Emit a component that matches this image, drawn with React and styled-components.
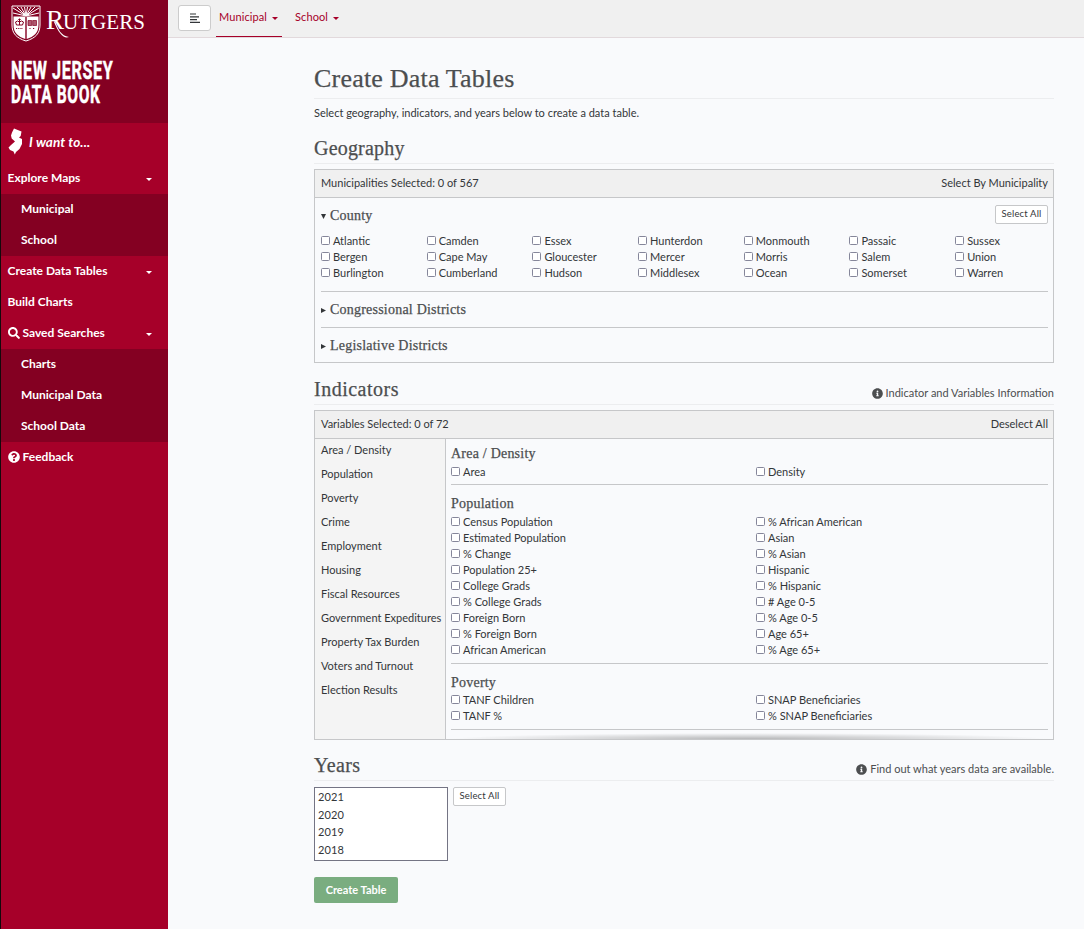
import React from "react";
import styled, { createGlobalStyle } from "styled-components";
import { FaSearch, FaQuestionCircle, FaInfoCircle } from "react-icons/fa";

const Global = createGlobalStyle`
  * { box-sizing: border-box; }
  body { margin: 0; background: #f9fafc; color: #333639; font: 11px/16px Lato, sans-serif; }
  h1, h2, h3, p { margin: 0; }
`;

const Page = styled.div`
  display: flex;
  height: 929px;
  overflow: hidden;
`;

const Sidebar = styled.aside`
  width: 168px;
  flex: none;
  background: #a60029;
  border-left: 1px solid #14090c;
  color: #fff;
`;

const Brand = styled.div`
  height: 123px;
  padding: 5px 0 0 10px;
  background: #840022;
`;

const LogoRow = styled.div`
  display: flex;
  height: 53px;
`;

const Wordmark = styled.svg`
  margin-left: 5px;
  overflow: visible;
  font-family: "Liberation Serif", serif;
`;

const BrandName = styled.div`
  width: 200px;
  font: bold 26.5px/24px Roboto, sans-serif;
  letter-spacing: 1px;
  -webkit-text-stroke: 0.5px #fff;
  transform: scaleX(${(p) => p.$stretch});
  transform-origin: 0 0;
`;

const Want = styled.div`
  display: flex;
  align-items: center;
  height: 40px;
  padding: 0 0 3px 7px;
  gap: 6px;
  font-size: 13.5px;
  font-weight: bold;
  font-style: italic;
  letter-spacing: 0.1px;
`;

const NavItem = styled.div`
  display: flex;
  align-items: center;
  height: 31px;
  padding: 0 16px 1px ${(p) => (p.$sub ? 20 : 6.5)}px;
  gap: 3px;
  background: ${(p) => (p.$sub ? "#840022" : "transparent")};
  font-size: 12px;
  font-weight: bold;
`;

const Caret = styled.span`
  width: 0;
  height: 0;
  margin-left: ${(p) => p.$gap || "auto"};
  margin-top: 3px;
  border: 3px solid transparent;
  border-top-color: currentColor;
  border-bottom: 0;
`;

const Body = styled.div`
  flex: 1;
`;

const TopBar = styled.header`
  display: flex;
  height: 38px;
  padding-left: 10px;
  background: #f0f0f0;
  border-bottom: 1px solid #e2d9dc;
`;

const Toggle = styled.button`
  width: 33px;
  height: 26px;
  margin: 5px 5px 0 0;
  padding: 0 0 1px;
  display: flex;
  align-items: center;
  justify-content: center;
  background: #fff;
  border: 1px solid #ccc;
  border-radius: 3px;
`;

const Tab = styled.a`
  display: flex;
  align-items: center;
  width: 66px;
  height: 37px;
  margin-right: 10px;
  padding: 0 0 2px 3px;
  color: #a60029;
  letter-spacing: 0.1px;
  border-bottom: 1px solid ${(p) => (p.$active ? "#a60029" : "transparent")};
`;

const Main = styled.main`
  width: 740px;
  margin-left: 146px;
  padding-top: 24px;
`;

const serif = `
  font-family: "Liberation Serif", serif;
  font-weight: normal;
  color: #4c4e50;
  -webkit-text-stroke: 0.25px #4c4e50;
`;

const Title = styled.h1`
  ${serif}
  height: 37px;
  border-bottom: 1px solid #ecedef;
  font-size: 26px;
  line-height: 34px;
  letter-spacing: 0.2px;
`;

const Intro = styled.p`
  height: 38px;
  padding-top: 6px;
`;

const SectionHead = styled.div`
  display: flex;
  justify-content: space-between;
  align-items: flex-end;
  height: ${(p) => p.$height}px;
  margin-bottom: ${(p) => p.$after || 5}px;
  border-bottom: 1px solid #ecedef;
`;

const SectionTitle = styled.h2`
  ${serif}
  font-size: 20px;
  line-height: 29px;
  letter-spacing: ${(p) => p.$spacing}px;
`;

const InfoLink = styled.a`
  display: flex;
  align-items: center;
  gap: 3px;
  padding-bottom: 3px;
  color: #4c4e50;
`;

const Panel = styled.section`
  height: ${(p) => p.$height}px;
  border: 1px solid #c6c7c9;
`;

const PanelHead = styled.div`
  display: flex;
  justify-content: space-between;
  height: 28px;
  padding: 5px 5px 0 6px;
  background: #f0f0f0;
  border-bottom: 1px solid #c6c7c9;
`;

const Group = styled.div`
  height: ${(p) => p.$height}px;
  margin: 0 5px 0 6px;
  border-bottom: 1px solid ${(p) => (p.$last ? "transparent" : "#c6c7c9")};
`;

const Summary = styled.div`
  display: flex;
  justify-content: space-between;
  align-items: center;
  height: 35px;

  button { margin-bottom: 2px; }
`;

const GroupTitle = styled.h3`
  ${serif}
  display: flex;
  align-items: center;
  gap: 4px;
  font-size: 14px;
  line-height: 18px;
  letter-spacing: 0.22px;
`;

const SmallButton = styled.button`
  width: 53px;
  height: 19px;
  padding: 0 0 2px;
  background: #fff;
  border: 1px solid #c6c7c9;
  border-radius: 2px;
  color: #333639;
  font: 9.5px Lato, sans-serif;
  letter-spacing: 0.15px;
`;

const Counties = styled.div`
  display: grid;
  grid-auto-flow: column;
  grid-template-rows: repeat(3, 16px);
  grid-template-columns: repeat(7, 105.7px);
`;

const CheckLabel = styled.label`
  display: flex;
  align-items: center;
  height: 16px;
  gap: 3px;
  white-space: nowrap;
`;

const Box = styled.input`
  appearance: none;
  width: 9px;
  height: 9px;
  margin: 0 0 2px;
  background: #fff;
  border: 1px solid #85869a;
  border-radius: 1.5px;
`;

const Split = styled.div`
  display: flex;
  height: 300px;
`;

const Categories = styled.nav`
  width: 131px;
  padding-left: 6px;
  background: #f4f4f4;
  border-right: 1px solid #c6c7c9;
  line-height: 24px;
  white-space: nowrap;

  div:first-child { margin-top: -1px; }
`;

const Variables = styled.div`
  display: flex;
  flex-direction: column;
  flex: 1;
  padding: 0 5px;
`;

const VarGroup = styled.div`
  height: ${(p) => p.$height}px;
  padding-top: ${(p) => p.$top}px;
  border-bottom: 1px solid #c6c7c9;
`;

const VarGrid = styled.div`
  display: grid;
  grid-template-columns: 305px 1fr;
  padding-top: ${(p) => p.$top || 0}px;
`;

const ScrollShadow = styled.div`
  height: 6px;
  margin: auto 0 0;
  background: radial-gradient(farthest-side at 50% 100%, rgba(0, 0, 0, 0.27), rgba(0, 0, 0, 0));
`;

const YearRow = styled.div`
  display: flex;
  gap: 5px;
`;

const YearList = styled.ul`
  width: 134px;
  height: 74px;
  margin: 0;
  padding: 0 3px;
  list-style: none;
  background: #fff;
  border: 1px solid #747484;
  line-height: 17.7px;
  letter-spacing: 0.1px;
`;

const CreateButton = styled.button`
  width: 84px;
  height: 26px;
  margin-top: 16px;
  padding: 0 0 2px;
  border: 0;
  border-radius: 2px;
  background: #7aad80;
  color: #fff;
  font: bold 11px Lato, sans-serif;
`;

const Shield = () => (
  <svg width="30" height="37" viewBox="0 0 30 37">
    <path d="M1 1H29V20C29 28 25 33 15 36C5 33 1 28 1 20Z" fill="#840022" stroke="#fff" strokeWidth="1" />
    <path d="M15 11L2 8M15 11L2 3M15 11L6 2M15 11L10 2M15 11L13.5 2M15 11L16.5 2M15 11L20 2M15 11L24 2M15 11L28 3M15 11L28 8" stroke="#fff" strokeWidth="1" />
    <path d="M2.5 11.5H14.3V34C7 31.5 2.5 28 2.5 20ZM15.7 11.5H27.5V20C27.5 28 23 31.5 15.7 34Z" fill="#fff" />
    <path d="M5.5 20L4.5 17Q6.5 15 8.5 17Q10.5 15 12.5 17L11.5 20ZM8.5 13.5V20M7.3 14.5H9.7" fill="none" stroke="#840022" strokeWidth="1" />
    <path d="M17 15.5H20.7V20.5H17ZM21.7 15.5H25.5V20.5H21.7Z" fill="#840022" fillOpacity=".65" stroke="#840022" strokeWidth=".7" />
    <path d="M5 23.5H12M18.5 23.5H20M22 23.5H24" stroke="#840022" strokeWidth="1.2" strokeDasharray="1 .8" />
  </svg>
);

const State = () => (
  <svg width="15" height="27" viewBox="0 0 15 27">
    <path d="M6 .5L13.5 3.5L12.7 8L11 9.5L14 11V16L11.5 21L8 24L6.8 26.5L5.5 23.5L2 22L.5 19.5L3 17L7 13.5L3.7 10.5L3 7.5L4 4.5Z" fill="#fff" />
  </svg>
);

const Triangle = ({ open }) => (
  <svg width="5" height="6" viewBox="0 0 5 6">
    <path d={open ? "M0 1H5L2.5 6Z" : "M0 1V6L5 3.5Z"} fill="#333639" />
  </svg>
);

const Check = ({ children }) => (
  <CheckLabel>
    <Box type="checkbox" />
    {children}
  </CheckLabel>
);

const counties = ["Atlantic", "Bergen", "Burlington", "Camden", "Cape May", "Cumberland", "Essex", "Gloucester", "Hudson", "Hunterdon", "Mercer", "Middlesex", "Monmouth", "Morris", "Ocean", "Passaic", "Salem", "Somerset", "Sussex", "Union", "Warren"];
const categories = ["Area / Density", "Population", "Poverty", "Crime", "Employment", "Housing", "Fiscal Resources", "Government Expeditures", "Property Tax Burden", "Voters and Turnout", "Election Results"];
const variables = [
  { name: "Area / Density", height: 46, top: 6, gap: 1, items: ["Area", "Density"] },
  { name: "Population", height: 179, top: 10, gap: 1, items: ["Census Population", "% African American", "Estimated Population", "Asian", "% Change", "% Asian", "Population 25+", "Hispanic", "College Grads", "% Hispanic", "% College Grads", "# Age 0-5", "Foreign Born", "% Age 0-5", "% Foreign Born", "Age 65+", "African American", "% Age 65+"] },
  { name: "Poverty", height: 66, top: 10, gap: 0, items: ["TANF Children", "SNAP Beneficiaries", "TANF %", "% SNAP Beneficiaries"] },
];
const nav = [
  { text: "Explore Maps", caret: true },
  { text: "Municipal", sub: true },
  { text: "School", sub: true },
  { text: "Create Data Tables", caret: true },
  { text: "Build Charts" },
  { text: "Saved Searches", caret: true, icon: <FaSearch size={12} /> },
  { text: "Charts", sub: true },
  { text: "Municipal Data", sub: true },
  { text: "School Data", sub: true },
  { text: "Feedback", icon: <FaQuestionCircle size={12} /> },
];

export default function App() {
  return (
    <Page>
      <Global />
      <Sidebar>
        <Brand>
          <LogoRow>
            <Shield />
            <Wordmark width="100" height="36" fill="#fff">
              <text x="0" y="24" fontSize="27">R</text>
              <text x="17" y="24" fontSize="21" textLength="82">UTGERS</text>
              <path d="M9 16C12 24 15 31 23 32C18 34 13 29 8 17Z" />
            </Wordmark>
          </LogoRow>
          <BrandName $stretch={0.61}>NEW JERSEY</BrandName>
          <BrandName $stretch={0.59}>DATA BOOK</BrandName>
        </Brand>
        <Want>
          <State />
          I want to...
        </Want>
        {nav.map((n) => (
          <NavItem key={n.text} $sub={n.sub}>
            {n.icon}
            {n.text}
            {n.caret && <Caret />}
          </NavItem>
        ))}
      </Sidebar>
      <Body>
        <TopBar>
          <Toggle>
            <svg width="10" height="10" viewBox="0 0 10 10">
              <path d="M0 1H6M0 3.8H9M0 6.6H7M0 9.4H10" stroke="#333639" strokeWidth="1.2" />
            </svg>
          </Toggle>
          <Tab $active>Municipal<Caret $gap="5px" /></Tab>
          <Tab>School<Caret $gap="5px" /></Tab>
        </TopBar>
        <Main>
          <Title>Create Data Tables</Title>
          <Intro>Select geography, indicators, and years below to create a data table.</Intro>
          <SectionHead $height={27}>
            <SectionTitle $spacing={0.2}>Geography</SectionTitle>
          </SectionHead>
          <Panel $height={194}>
            <PanelHead>
              <span>Municipalities Selected: 0 of 567</span>
              <span>Select By Municipality</span>
            </PanelHead>
            <Group $height={94}>
              <Summary>
                <GroupTitle><Triangle open />County</GroupTitle>
                <SmallButton>Select All</SmallButton>
              </Summary>
              <Counties>{counties.map((c) => <Check key={c}>{c}</Check>)}</Counties>
            </Group>
            <Group $height={36}>
              <Summary><GroupTitle><Triangle />Congressional Districts</GroupTitle></Summary>
            </Group>
            <Group $height={34} $last>
              <Summary><GroupTitle><Triangle />Legislative Districts</GroupTitle></Summary>
            </Group>
          </Panel>
          <SectionHead $height={42}>
            <SectionTitle $spacing={0.5}>Indicators</SectionTitle>
            <InfoLink><FaInfoCircle size={11} />Indicator and Variables Information</InfoLink>
          </SectionHead>
          <Panel $height={330}>
            <PanelHead>
              <span>Variables Selected: 0 of 72</span>
              <span>Deselect All</span>
            </PanelHead>
            <Split>
              <Categories>{categories.map((c) => <div key={c}>{c}</div>)}</Categories>
              <Variables>
                {variables.map((v) => (
                  <VarGroup key={v.name} $height={v.height} $top={v.top}>
                    <GroupTitle>{v.name}</GroupTitle>
                    <VarGrid $top={v.gap}>{v.items.map((i) => <Check key={i}>{i}</Check>)}</VarGrid>
                  </VarGroup>
                ))}
                <ScrollShadow />
              </Variables>
            </Split>
          </Panel>
          <SectionHead $height={41} $after={6}>
            <SectionTitle $spacing={0.35}>Years</SectionTitle>
            <InfoLink><FaInfoCircle size={11} />Find out what years data are available.</InfoLink>
          </SectionHead>
          <YearRow>
            <YearList>
              <li>2021</li>
              <li>2020</li>
              <li>2019</li>
              <li>2018</li>
            </YearList>
            <SmallButton>Select All</SmallButton>
          </YearRow>
          <CreateButton>Create Table</CreateButton>
        </Main>
      </Body>
    </Page>
  );
}
